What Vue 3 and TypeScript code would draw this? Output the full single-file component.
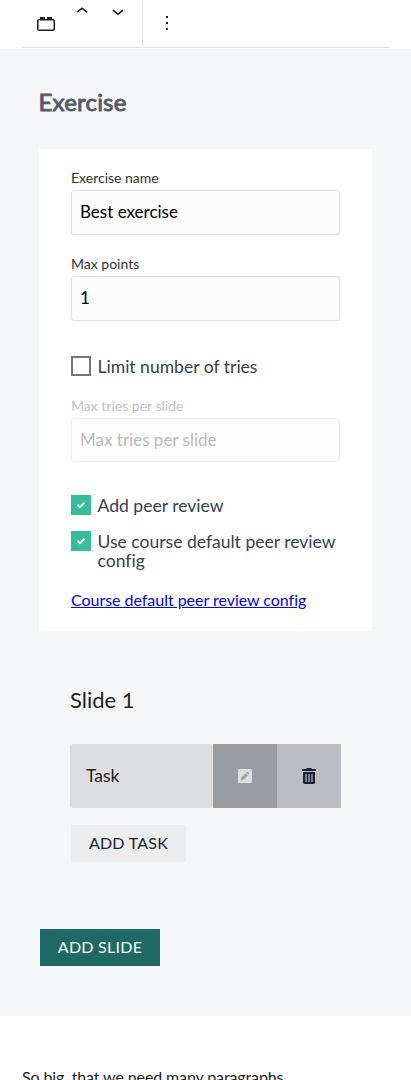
<script setup lang="ts">
import { ref } from 'vue'

const exerciseName = ref('Best exercise')
const maxPoints = ref('1')
const reviewOptions = ref([
  { label: 'Add peer review', checked: true },
  { label: 'Use course default peer review config', checked: true },
])
</script>

<template>
  <main class="page">
    <header class="toolbar">
      <div class="block-tools">
        <svg class="block-icon" width="24" height="24" viewBox="0 0 24 24" aria-hidden="true">
          <path d="M19 8h-1V6h-5v2h-2V6H6v2H5c-1.1 0-2 .9-2 2v8c0 1.1.9 2 2 2h14c1.1 0 2-.9 2-2v-8c0-1.1-.9-2-2-2zm.5 10c0 .3-.2.5-.5.5H5c-.3 0-.5-.2-.5-.5v-8c0-.3.2-.5.5-.5h14c.3 0 .5.2.5.5v8z" />
        </svg>
        <svg class="mover" width="24" height="24" viewBox="0 0 24 24" aria-hidden="true">
          <path d="M6.500 11.600 12 7.200l5.500 4.400-.9 1.200L12 9.200l-4.500 3.600-1-1.200z" />
        </svg>
        <svg class="mover" width="24" height="24" viewBox="0 0 24 24" aria-hidden="true">
          <path d="M17.500 10.800 12 15.200l-5.500-4.400.9-1.200L12 13.200l4.500-3.600 1 1.200z" />
        </svg>
      </div>
      <svg class="more" width="24" height="24" viewBox="0 0 24 24" aria-hidden="true">
        <path d="M13 19h-2v-2h2v2zm0-6h-2v-2h2v2zm0-6h-2V5h2v2z" />
      </svg>
    </header>

    <section class="exercise">
      <h1>Exercise</h1>
      <div class="card">
        <label class="field">
          <span>Exercise name</span>
          <input v-model="exerciseName" type="text" />
        </label>
        <label class="field">
          <span>Max points</span>
          <input v-model="maxPoints" type="text" />
        </label>
        <label class="check limit">
          <span class="box"></span>
          <span class="check-label">Limit number of tries</span>
        </label>
        <label class="field disabled">
          <span>Max tries per slide</span>
          <input type="text" placeholder="Max tries per slide" disabled />
        </label>
        <label v-for="option in reviewOptions" :key="option.label" class="check">
          <span class="box" :class="{ checked: option.checked }">
            <svg v-if="option.checked" width="10" height="10" viewBox="0 0 10 10" aria-hidden="true">
              <path d="m1.500 4.700 2.500 2.500 4.600-4.600" />
            </svg>
          </span>
          <span class="check-label">{{ option.label }}</span>
        </label>
        <a class="config-link" href="#">Course default peer review config</a>
      </div>

      <div class="slide">
        <h2>Slide 1</h2>
        <div class="task">
          <span class="task-name">Task</span>
          <button class="edit" aria-label="Edit">
            <svg width="14" height="14" viewBox="0 0 14 14" aria-hidden="true">
              <rect width="14" height="14" rx="1.500" fill="#dddee0" />
              <path d="m2.600 11.500.6-2.800 4.500-4.400 2.100 2.100-4.400 4.400zM8.300 3.700l.8-.8c.9-.7 2.600.9 2 1.900l-.8.9z" fill="#989ca3" />
            </svg>
          </button>
          <button class="delete" aria-label="Delete">
            <svg width="14" height="16" viewBox="0 0 14 16" aria-hidden="true">
              <path d="M4.500 0h5v1H14v2H0V1h4.500z" fill="#1a2333" />
              <path d="M1 4h12v11l-1 1H2l-1-1z" fill="#1a2333" />
              <path d="M4 6v8M7 6v8M10 6v8" stroke="#777d88" stroke-width="2" />
            </svg>
          </button>
        </div>
        <button class="button secondary">ADD TASK</button>
      </div>
      <button class="button primary">ADD SLIDE</button>
    </section>
    <p class="paragraph">So big, that we need many paragraphs.</p>
  </main>
</template>

<style>
body {
  margin: 0;
}
</style>

<style scoped>
* {
  box-sizing: border-box;
}
.page {
  height: 1080px;
  overflow: hidden;
  background: #fff;
  color: #1e1e1e;
  font-family: Lato, sans-serif;
  font-size: 17px;
  font-variant-ligatures: none;
}
.toolbar {
  display: flex;
  height: 48px;
  margin: 0 22px 1px;
  border-bottom: 1px solid #e0e0e0;
}
.block-tools {
  display: flex;
  width: 121px;
  height: 46px;
  padding-left: 12px;
  border-right: 1px solid #ddd;
}
.block-icon {
  margin-top: 11px;
}
.mover {
  margin-left: 12px;
}
.more {
  margin: 11px 0 0 12px;
}
.toolbar svg {
  flex: none;
  fill: #1e1e1e;
}
.exercise {
  height: 967px;
  padding: 38px 39px 0;
  background: #f5f6f8;
}
h1 {
  margin: 0 0 0 -0.5px;
  height: 62px;
  color: #535a66;
  font-size: 24px;
  font-weight: 400;
  line-height: 30px;
  letter-spacing: 0.2px;
  -webkit-text-stroke: 0.9px #535a66;
}
.card {
  height: 482px;
  padding: 20px 32px 0;
  background: #fff;
}
.field {
  display: block;
  height: 86px;
  color: #333;
  font-size: 14px;
}
.field span {
  display: block;
  height: 21px;
  line-height: 18px;
}
.field input {
  display: block;
  width: 100%;
  height: 45px;
  padding: 0 8px 2px;
  border: 1px solid #dedede;
  border-radius: 3px;
  background: #fcfcfc;
  color: #000;
  font: 17px Lato, sans-serif;
}
.check {
  display: flex;
  gap: 6.5px;
  margin-bottom: 15.5px;
  color: #35404f;
  font-size: 17.55px;
  line-height: 19.4px;
}
.check.limit {
  margin: 15px 0 20.6px;
}
.check-label {
  padding-top: 1px;
}
.box {
  display: flex;
  flex: none;
  align-items: center;
  justify-content: center;
  width: 20px;
  height: 20px;
  border: 2px solid #767676;
}
.box.checked {
  border: 0;
  background: #37bc9b;
}
.box path {
  fill: none;
  stroke: #fff;
  stroke-width: 2;
}
.disabled {
  height: 98.1px;
  color: #bfc1c5;
}
.disabled input {
  height: 44px;
  border-color: #eee;
  background: #fefefe;
}
.disabled input::placeholder {
  color: #b9b9b9;
}
.config-link {
  display: block;
  margin-top: 19px;
  color: #00e;
  font-size: 16px;
  line-height: 20px;
  letter-spacing: -0.03px;
}
.slide {
  height: 298px;
  padding: 54px 31px 0;
}
h2 {
  height: 59px;
  margin: 0;
  font-size: 22px;
  font-weight: 400;
  line-height: 30px;
}
.task {
  display: grid;
  grid-template-columns: 1fr 64px 64px;
  height: 64px;
}
.task-name {
  padding-left: 16px;
  border-radius: 3px;
  background: #dddee0;
  font-size: 17.5px;
  line-height: 64px;
}
button {
  padding: 0;
  border: 0;
}
.edit,
.delete {
  display: flex;
  align-items: center;
  justify-content: center;
  background: #989ca3;
}
.delete {
  background: #babdc2;
}
.button {
  display: block;
  height: 37px;
  padding-bottom: 2px;
  font: 16px Lato, sans-serif;
  line-height: 35px;
  letter-spacing: 0.25px;
}
.secondary {
  width: 115px;
  margin: 17px 0 0 1px;
  background: #ebedee;
  color: #1a2333;
}
.primary {
  width: 120px;
  margin-left: 1px;
  background: #1f6964;
  color: #fff;
}
.paragraph {
  margin: 49px 22px 0;
  font-size: 16px;
  line-height: 24px;
  letter-spacing: -0.12px;
  white-space: nowrap;
}
</style>
